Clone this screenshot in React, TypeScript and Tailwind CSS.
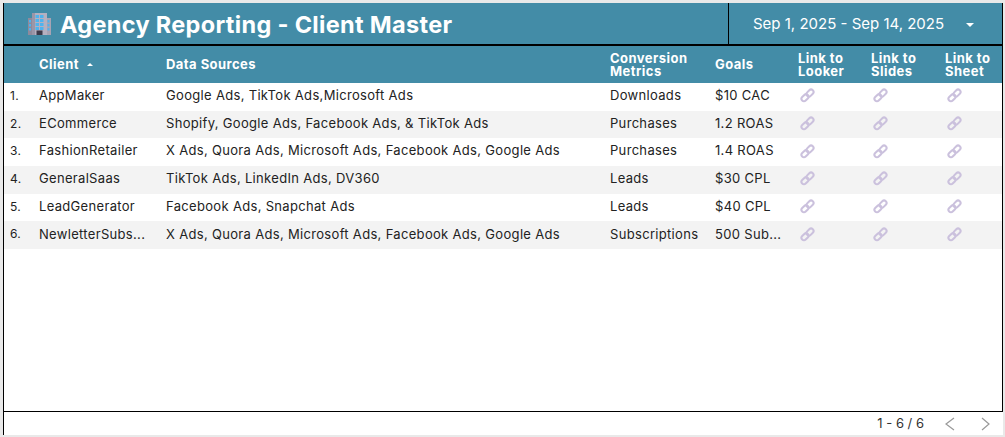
import React from 'react';

const rows = [
  { client: 'AppMaker', sources: 'Google Ads, TikTok Ads,Microsoft Ads', metric: 'Downloads', goal: '$10 CAC' },
  { client: 'ECommerce', sources: 'Shopify, Google Ads, Facebook Ads, & TikTok Ads', metric: 'Purchases', goal: '1.2 ROAS' },
  { client: 'FashionRetailer', sources: 'X Ads, Quora Ads, Microsoft Ads, Facebook Ads, Google Ads', metric: 'Purchases', goal: '1.4 ROAS' },
  { client: 'GeneralSaas', sources: 'TikTok Ads, LinkedIn Ads, DV360', metric: 'Leads', goal: '$30 CPL' },
  { client: 'LeadGenerator', sources: 'Facebook Ads, Snapchat Ads', metric: 'Leads', goal: '$40 CPL' },
  { client: 'NewletterSubs...', sources: 'X Ads, Quora Ads, Microsoft Ads, Facebook Ads, Google Ads', metric: 'Subscriptions', goal: '500 Sub...' },
];

const cols = 'grid grid-cols-[35px_127px_444px_105px_83px_73px_74px_1fr] items-center';

const LinkIcon = () => (
  <svg width="15" height="15" viewBox="0 0 14 14" fill="none" stroke="#cbc1dd" strokeWidth="1.9">
    <rect x="0.9" y="4.6" width="7.4" height="4.6" rx="2.3" transform="rotate(-45 4.6 6.9) translate(-1.5 1.6)" />
    <rect x="5.7" y="4.6" width="7.4" height="4.6" rx="2.3" transform="rotate(-45 9.4 6.9) translate(1.5 -1.6)" />
  </svg>
);

const Building = () => (
  <svg width="23" height="24" viewBox="0 0 23 24">
    <rect x="0" y="6" width="5" height="17" fill="#8f8a9c" />
    <rect x="17" y="6" width="6" height="17" fill="#a8a3b3" />
    <rect x="4" y="1" width="15" height="22" fill="#b5b0c0" />
    <rect x="4" y="1" width="3" height="22" fill="#9b96a8" />
    {[3, 7, 11, 15].map((y) =>
      [7.5, 12].map((x) => <rect key={`${x}-${y}`} x={x} y={y} width="3.5" height="3" fill="#4fb3ee" />),
    )}
    {[8, 12, 16].map((y) => (
      <React.Fragment key={y}>
        <rect x="1" y={y} width="2" height="2.5" fill="#4fb3ee" />
        <rect x="19.5" y={y} width="2" height="2.5" fill="#4fb3ee" />
      </React.Fragment>
    ))}
    <rect x="8.5" y="18.5" width="6" height="4.5" fill="#3d3a4a" />
  </svg>
);

export default function App() {
  return (
    <div className="w-[1005px] h-[437px] bg-[#e9e9e9] pt-[3px] pl-[3px] pr-[2px] pb-[2px] font-['Inter','Liberation_Sans',sans-serif] overflow-hidden">
      <div className="h-full flex flex-col bg-white border-l border-black">
        <div className="flex-1 flex flex-col border-r border-black">
          <div className="h-[43px] shrink-0 flex bg-[#438ca7] border-b-2 border-black">
            <div className="flex-1 flex items-center gap-[9px] pl-[24px] border-r border-black">
              <Building />
              <h1 className="pt-[3px] text-[23.5px] leading-none font-bold text-white tracking-[0.32px] whitespace-nowrap">Agency Reporting - Client Master</h1>
            </div>
            <div className="w-[273px] flex items-center text-white text-[15px] pl-[24px] pt-[2px]">
              <span className="whitespace-nowrap">Sep 1, 2025 - Sep 14, 2025</span>
              <span className="ml-[22px] w-0 h-0 border-x-[4px] border-x-transparent border-t-[4px] border-t-white" />
            </div>
          </div>

          <div className={`${cols} h-[37px] shrink-0 bg-[#438ca7] text-white text-[13px] leading-[13px] font-bold tracking-[0.45px]`}>
            <div />
            <div className="flex items-center gap-[8px]">
              Client
              <span className="w-0 h-0 border-x-[3.5px] border-x-transparent border-b-[3.5px] border-b-white" />
            </div>
            <div>Data Sources</div>
            <div>Conversion<br />Metrics</div>
            <div>Goals</div>
            <div>Link to<br />Looker</div>
            <div>Link to<br />Slides</div>
            <div>Link to<br />Sheet</div>
          </div>

          <div className="flex-1 text-[13px] text-[#222222] tracking-[0.32px]">
            {rows.map((r, i) => (
              <div key={r.client} className={`${cols} h-[27.7px] pb-[2px] ${i % 2 === 1 ? 'bg-[#f3f3f3]' : 'bg-white'}`}>
                <div className="pl-[6px] text-[12px]">{i + 1}.</div>
                <div className="whitespace-nowrap">{r.client}</div>
                <div className="whitespace-nowrap">{r.sources}</div>
                <div className="whitespace-nowrap">{r.metric}</div>
                <div className="whitespace-nowrap">{r.goal}</div>
                <div className="pl-[2px]"><LinkIcon /></div>
                <div className="pl-[2px]"><LinkIcon /></div>
                <div className="pl-[2px]"><LinkIcon /></div>
              </div>
            ))}
          </div>
        </div>

        <div className="h-[24px] shrink-0 border-t border-black flex items-center justify-end text-[13px] text-[#333333]">
          <span>1 - 6 / 6</span>
          <svg className="ml-[20px]" width="12" height="14" viewBox="0 0 12 14" fill="none" stroke="#999999" strokeWidth="1.2"><path d="M10 1 2 7l8 6" /></svg>
          <svg className="ml-[24px] mr-[11px]" width="12" height="14" viewBox="0 0 12 14" fill="none" stroke="#999999" strokeWidth="1.2"><path d="m2 1 7 6-7 6" /></svg>
        </div>
      </div>
    </div>
  );
}
